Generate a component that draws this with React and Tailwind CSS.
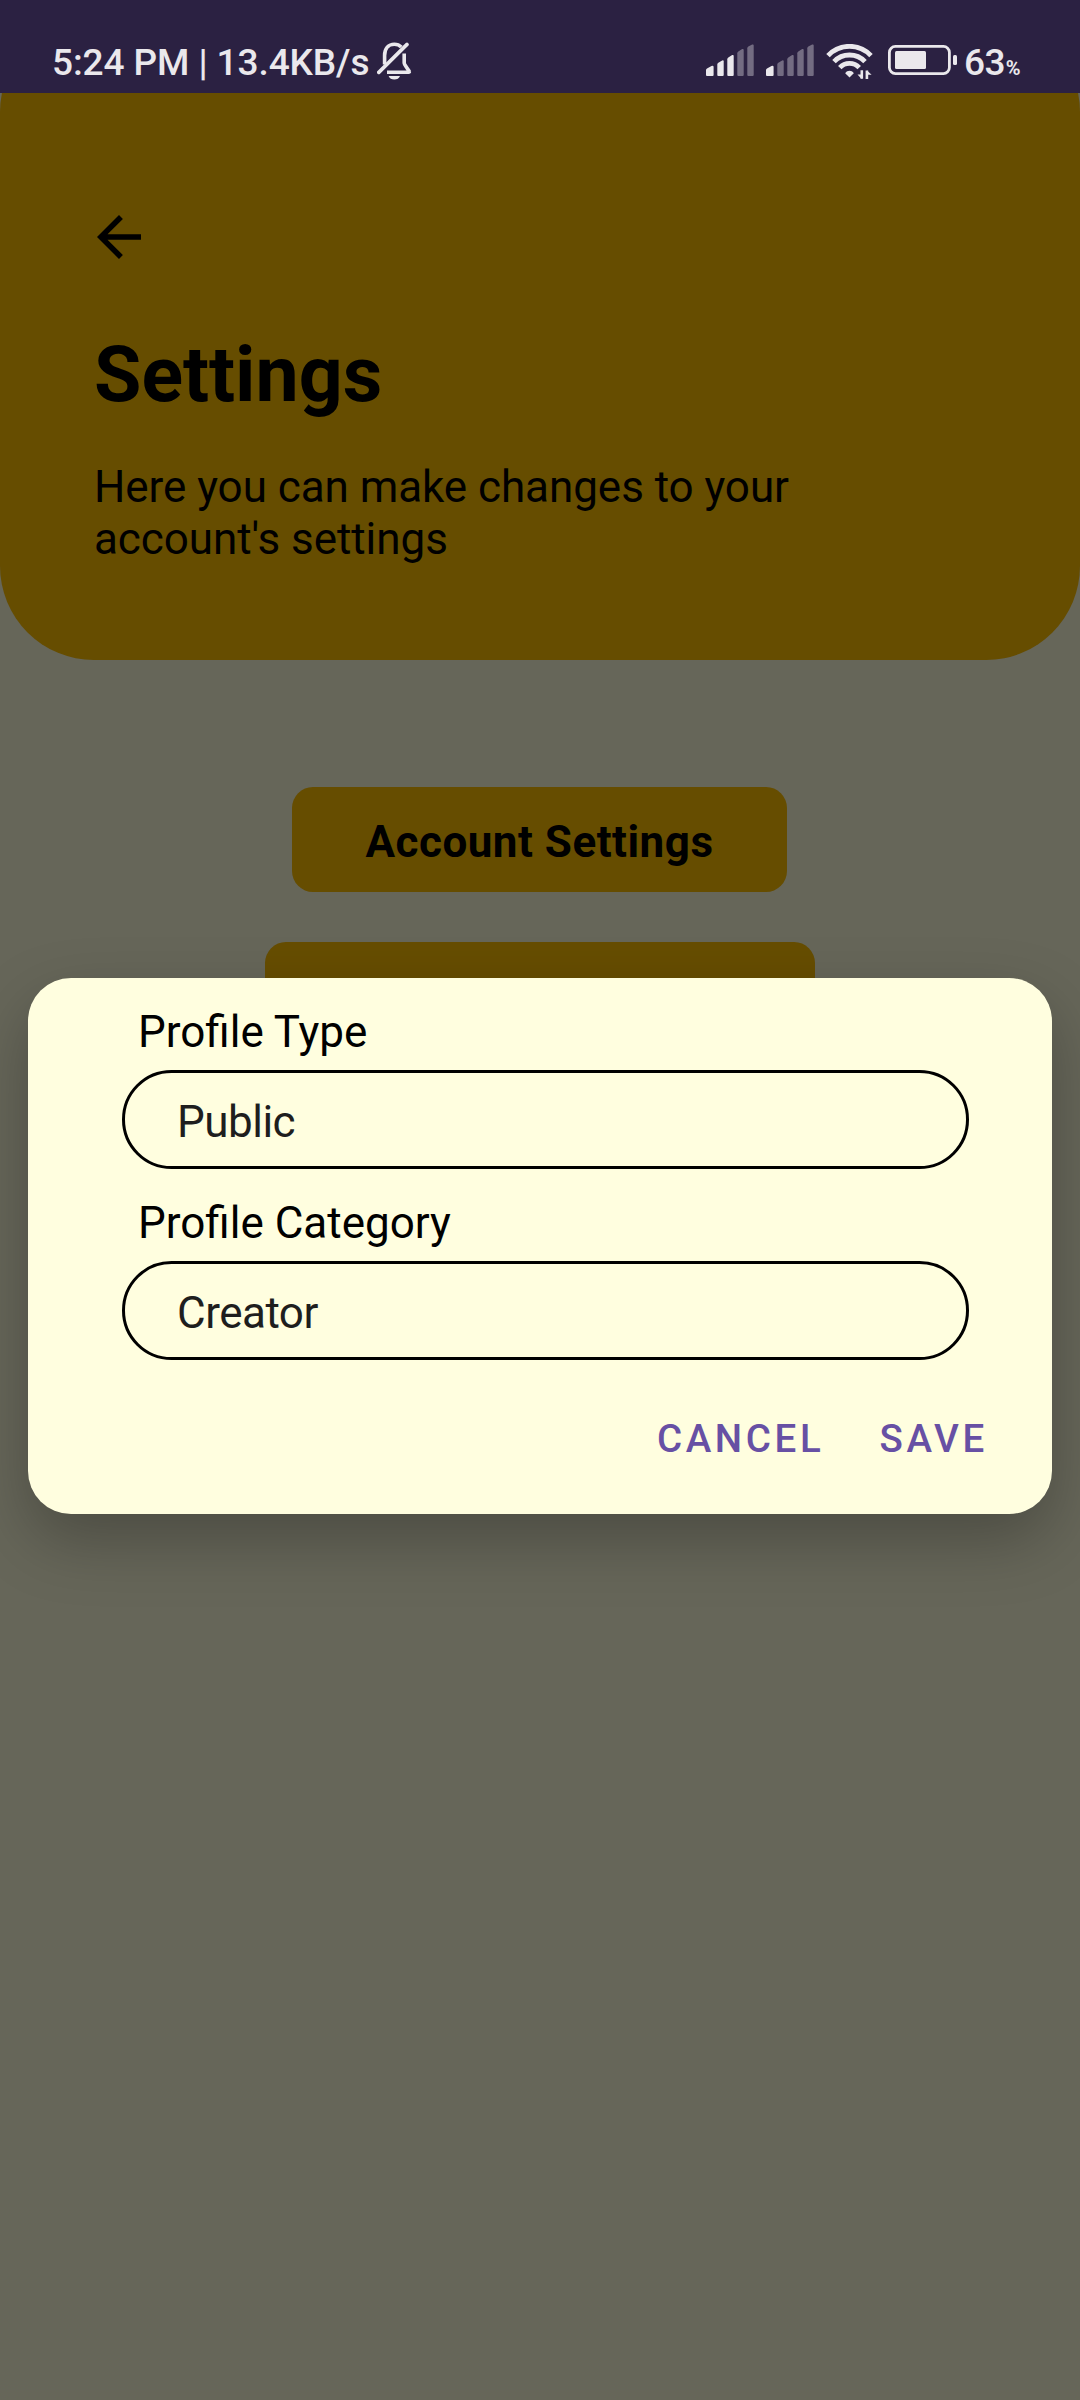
const SignalBars = ({ active }) => {
  const bars = [
    "M0 29V26Q0 25 1 24.5L5.5 22Q7.6 21.2 7.6 23V31Q7.6 32 6.6 32H1Q0 32 0 31Z",
    "M11.3 20.5Q11.3 19.3 12.3 18.7L16.2 16.4Q17.7 15.8 17.7 17.4V31Q17.7 32 16.7 32H12.3Q11.3 32 11.3 31Z",
    "M21.3 15.2Q21.3 14 22.3 13.4L26.2 11.1Q27.7 10.5 27.7 12.1V31Q27.7 32 26.7 32H22.3Q21.3 32 21.3 31Z",
    "M31.3 9.2Q31.3 8 32.3 7.4L36.2 5.1Q37.7 4.5 37.7 6.1V31Q37.7 32 36.7 32H32.3Q31.3 32 31.3 31Z",
    "M41.3 4.2Q41.3 3 42.3 2.4L46.2 .6Q47.7 0 47.7 1.6V31Q47.7 32 46.7 32H42.3Q41.3 32 41.3 31Z",
  ];
  return (
    <svg className="h-8 w-12" viewBox="0 0 48 32" fill="#eae8ec">
      {bars.map((d, i) => (
        <path key={i} d={d} opacity={i < active ? 1 : 0.38} />
      ))}
    </svg>
  );
};

const BellOff = () => (
  <svg className="ml-[8px] h-[38px] w-[35px]" viewBox="0 0 35 38" fill="none" stroke="#eae8ec" strokeWidth="3.6">
    <path d="M7.6 22.5V13.5C7.6 6.5 11.5 2.2 17.3 2.2C20.3 2.2 22.6 3.3 24.3 5.1" />
    <path d="M1.8 30.4L30 2.4" strokeLinecap="round" />
    <path d="M27.2 11.5V20.8C27.2 23.5 32 27.8 32.3 29.6C32.4 30 32.2 30.3 31.6 30.3H10" strokeLinejoin="round" />
    <path d="M11.6 34H23C22.2 36.4 20 37.6 17.3 37.6S12.4 36.4 11.6 34Z" fill="#eae8ec" stroke="none" />
  </svg>
);

const Wifi = () => (
  <svg className="ml-3 h-[36px] w-[47px]" viewBox="0 0 47 36" fill="none" stroke="#eae8ec" strokeWidth="4.8">
    <path d="M2 11.6A29.5 29.5 0 0 1 45 11.6" />
    <path d="M8 17.7A21.3 21.3 0 0 1 39 17.7" />
    <path d="M13.8 23.7A13.2 13.2 0 0 1 33.2 23.7" />
    <path d="M19.2 29.2C21.6 26 25.4 26 27.8 29.2L23.5 33.6Z" fill="#eae8ec" stroke="none" />
    <path d="M35.8 26.2V34.8M40.9 35V26.4" strokeWidth="2.6" />
    <path d="M31.5 30.6H35.6V34.9ZM45.6 30.8H41V26.4Z" fill="#eae8ec" stroke="none" />
  </svg>
);

const Battery = () => (
  <svg className="mt-px ml-[15px] h-[30px] w-[69px]" viewBox="0 0 69 30">
    <rect x="1.4" y="1.4" width="60" height="27.2" rx="6" fill="none" stroke="#eae8ec" strokeWidth="2.8" />
    <rect x="7" y="6" width="31" height="18" rx="1.5" fill="#eae8ec" />
    <rect x="65" y="10" width="4" height="10" rx="1.5" fill="#eae8ec" />
  </svg>
);

const StatusBar = () => (
  <header className="flex h-[93px] items-start justify-between bg-[#2b2142] pl-[52px] text-[#eae8ec]">
    <div className="flex pt-[42px]">
      <span className="pt-px text-[37px] leading-[40px] font-medium tracking-[-0.1px] whitespace-nowrap">5:24 PM | 13.4KB/s</span>
      <BellOff />
    </div>
    <div className="flex w-[374px] items-start pt-[44px]">
      <SignalBars active={3} />
      <div className="ml-3 flex">
        <SignalBars active={1} />
      </div>
      <Wifi />
      <Battery />
      <div className="ml-[7px] flex h-[36px] items-baseline pt-px font-medium">
        <span className="text-[37px] leading-[36px] tracking-[-0.6px]">63</span>
        <span className="ml-px text-[20px] leading-[20px] font-bold">%</span>
      </div>
    </div>
  </header>
);

const Field = ({ label, value }) => (
  <div>
    <div className="pl-[16px] text-[44px] leading-[52px] text-black">{label}</div>
    <div className="mt-[12px] flex h-[99px] items-center rounded-full border-3 border-black pl-[52px] text-[44px] leading-[52px] tracking-[-0.5px] text-[#1e1e1e]">
      <span className="pt-[5px]">{value}</span>
    </div>
  </div>
);

export default function App() {
  return (
    <div className="relative h-[2400px] w-[1080px] overflow-hidden bg-[#666659] font-[Roboto,sans-serif]">
      <StatusBar />
      <div className="h-[567px] overflow-hidden">
        <section className="-mt-[75px] h-[642px] rounded-[94px] bg-[#664d00] px-[94px] pt-[197px] text-black">
          <svg className="ml-[3px] h-[44px] w-[44px]" viewBox="4 4 16 16">
            <path d="M20 11H7.83l5.59-5.59L12 4l-8 8 8 8 1.41-1.41L7.83 13H20v-2z" />
          </svg>
          <h1 className="mt-[71px] text-[77px] leading-[90px] font-bold">Settings</h1>
          <p className="mt-[41px] w-[720px] text-[44px] leading-[52px] tracking-[-0.06px]">Here you can make changes to your account's settings</p>
        </section>
      </div>
      <main className="flex flex-col items-center gap-[50px] pt-[127px]">
        <button className="mr-px h-[105px] w-[495px] rounded-[21px] bg-[#664d00] pt-[5px] text-[44px] font-bold tracking-[0.5px] text-black">Account Settings</button>
        <div className="h-[105px] w-[550px] rounded-[21px] bg-[#664d00]" />
      </main>
      <div role="dialog" className="absolute top-[978px] left-[28px] h-[536px] w-[1024px] rounded-[43px] bg-[#fffedf] pt-[28px] pr-[64px] pl-[94px] shadow-[0_26px_64px_rgba(0,0,0,0.26)]">
        <div className="flex w-[847px] flex-col gap-[28px]">
          <Field label="Profile Type" value="Public" />
          <Field label="Profile Category" value="Creator" />
        </div>
        <div className="mt-[56px] flex justify-end gap-[55px] text-[38.5px] leading-[46px] font-medium tracking-[0.095em] text-[#6750a4]">
          <button>CANCEL</button>
          <button>SAVE</button>
        </div>
      </div>
    </div>
  );
}
